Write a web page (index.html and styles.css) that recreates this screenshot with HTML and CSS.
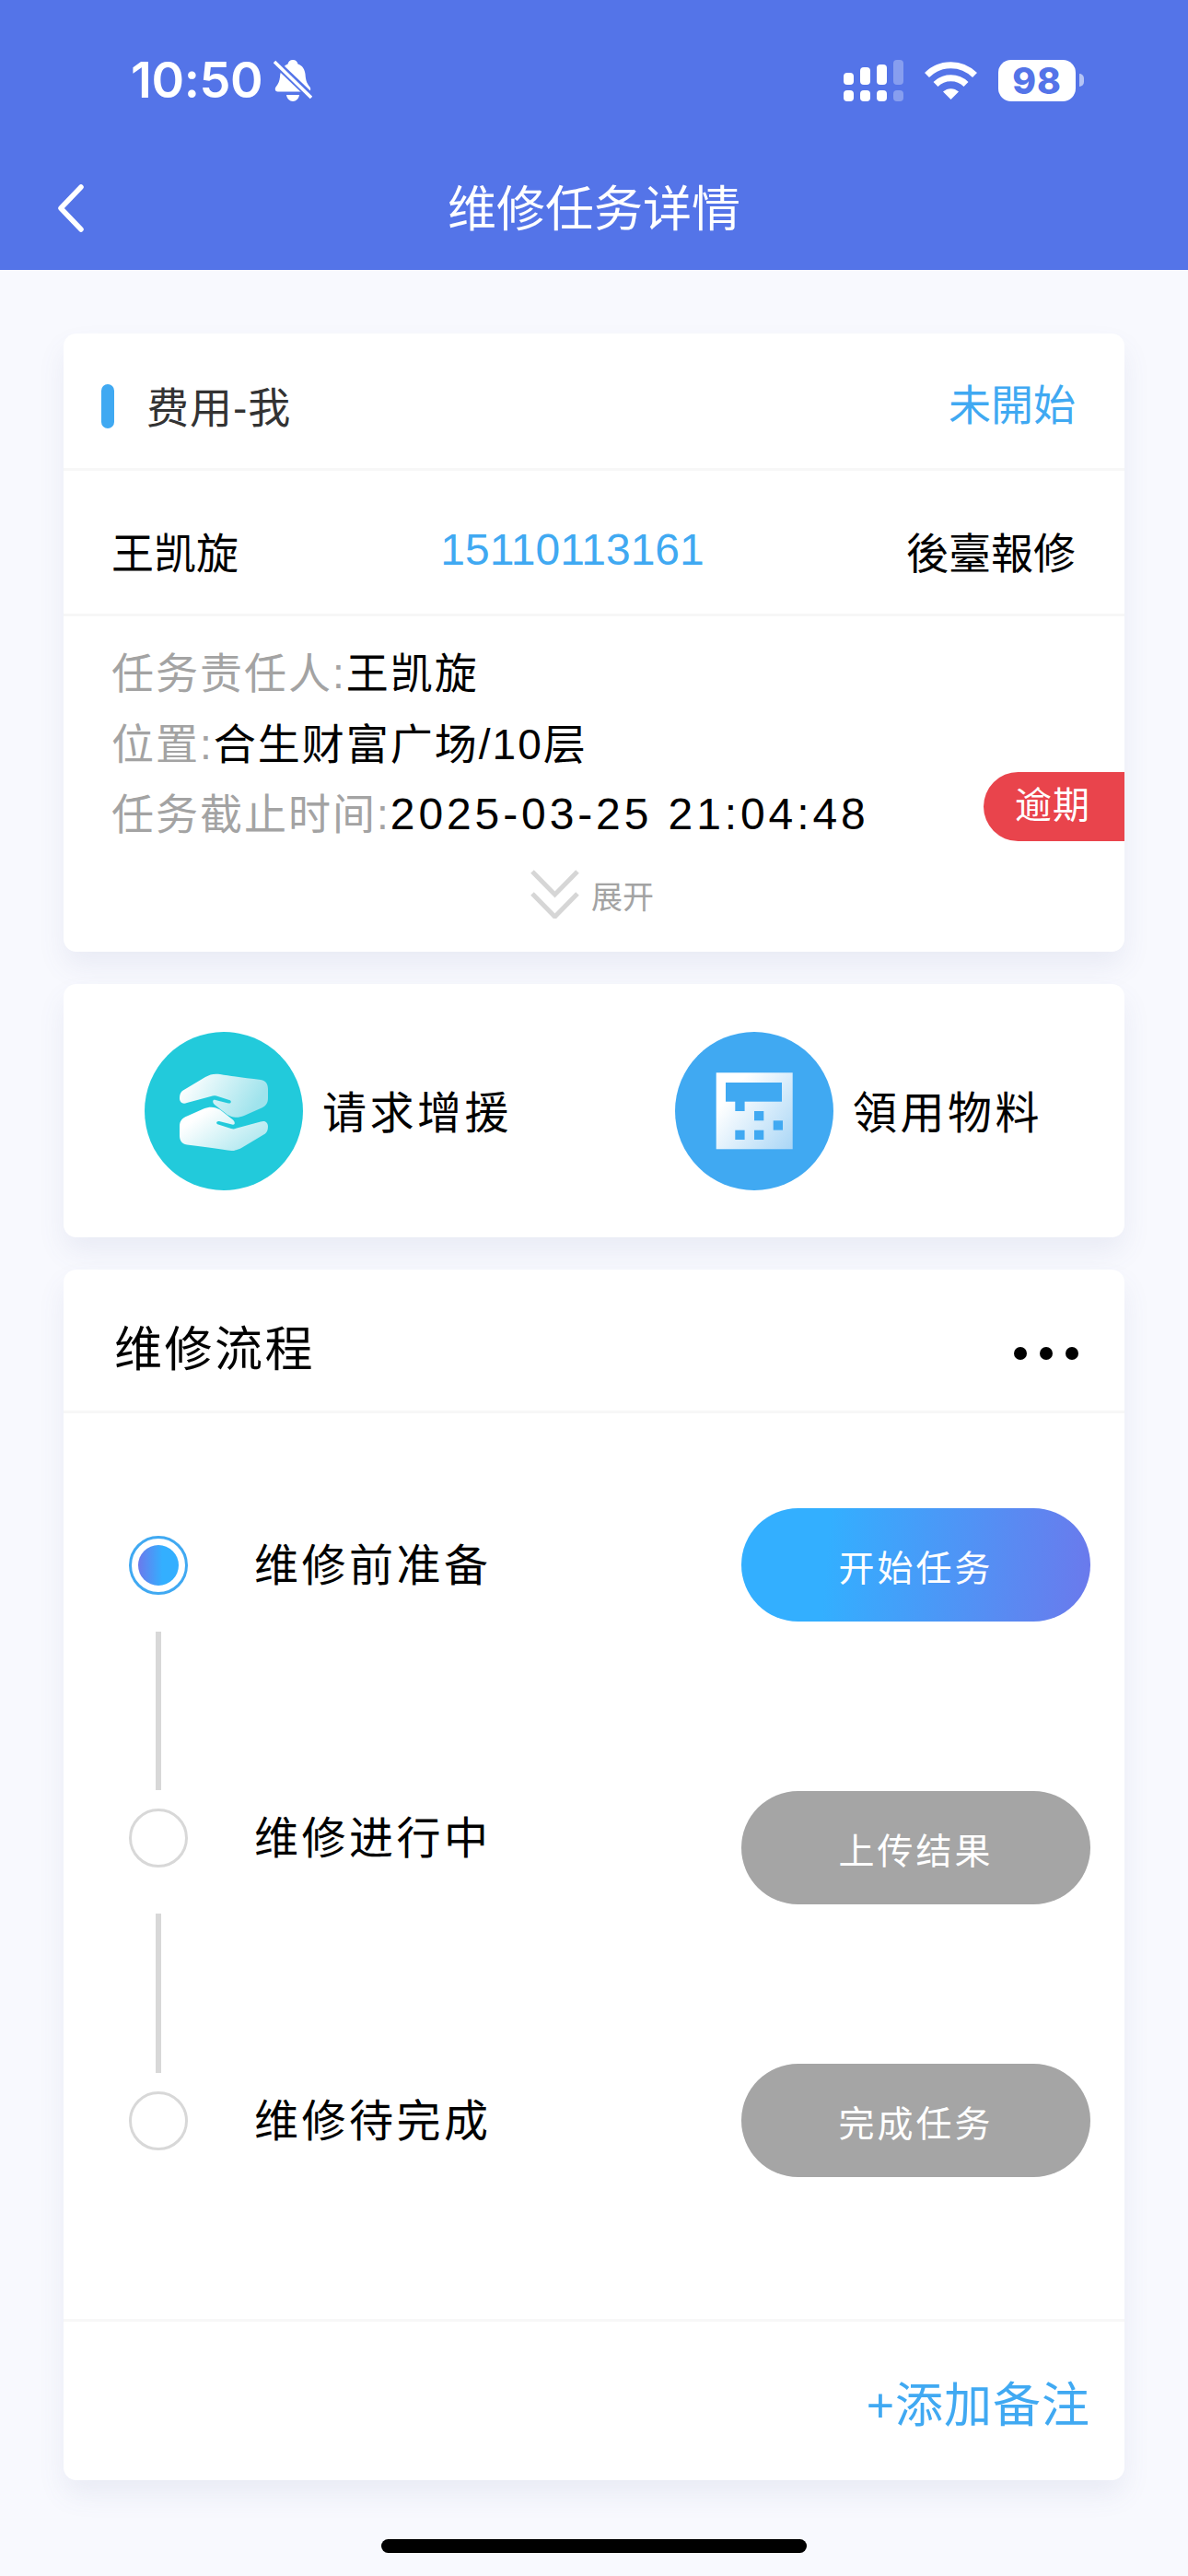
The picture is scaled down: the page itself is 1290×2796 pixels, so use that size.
FILE: index.html
```html
<!DOCTYPE html>
<html lang="zh-CN">
<head>
    <meta charset="UTF-8">
    <meta name="viewport" content="width=device-width, initial-scale=1.0">
    <title>维修任务详情</title>
    <link rel="stylesheet" href="styles.css">
</head>
<body>
    <header class="top">
        <div class="status">
            <div class="status-left">
                <span class="time">10:50</span>
                <svg class="bell" viewBox="0 0 42 45">
                    <path fill="#fff" d="M21 0c3 0 5 2 5.500 4.500 5 1.500 7.500 6 8 11 .4 5 1 9.500 5 14 1.500 2 .5 5-2 5H4.500c-2.500 0-3.500-3-2-5 3-3.500 4-7 4.500-11 .4-6 3-12 8.500-14C16 2 18 0 21 0z"/>
                    <path fill="#fff" d="M14 38h14c-.5 4-3.500 7-7 7s-6.500-3-7-7z"/>
                    <path stroke="#5474e8" stroke-width="8" d="M0 1l42 40"/>
                    <path stroke="#fff" stroke-width="3.500" d="M1 2l40 39"/>
                </svg>
            </div>
            <div class="status-right">
                <div class="signal">
                    <i class="bar b1"></i><i class="bar b2"></i><i class="bar b3"></i><i class="bar b4 dim"></i>
                    <i class="dot"></i><i class="dot"></i><i class="dot"></i><i class="dot dim"></i>
                </div>
                <svg class="wifi" viewBox="0 0 57 41">
                    <path fill="none" stroke="#fff" stroke-width="7" d="M2.500 14.500C17 0 40 0 54.500 14.500"/>
                    <path fill="none" stroke="#fff" stroke-width="7" d="M12 24.500C21 15.500 36 15.500 45 24.500"/>
                    <path fill="#fff" d="M20 32.500c5-4.500 12-4.500 17 0L28.500 41z"/>
                </svg>
                <div class="battery"><span>98</span></div>
                <i class="battery-tip"></i>
            </div>
        </div>
        <nav class="nav">
            <svg class="back" viewBox="0 0 29 52">
                <path fill="none" stroke="#fff" stroke-width="5.500" stroke-linecap="round" stroke-linejoin="round" d="M26 3L4 26l22 23"/>
            </svg>
            <h1>维修任务详情</h1>
            <span></span>
        </nav>
    </header>

    <main class="page">
        <section class="card info">
            <div class="info-head">
                <i class="marker"></i>
                <span class="info-title">费用-我</span>
                <span class="info-state">未開始</span>
            </div>
            <div class="info-person">
                <span class="person-name">王凯旋</span>
                <span class="person-phone">15110113161</span>
                <span class="person-source">後臺報修</span>
            </div>
            <div class="info-body">
                <p class="line"><span class="key">任务责任人:</span><span class="val">王凯旋</span></p>
                <p class="line"><span class="key">位置:</span><span class="val">合生财富广场/10层</span></p>
                <p class="line"><span class="key">任务截止时间:</span><span class="val val-date">2025-03-25 21:04:48</span></p>
                <span class="overdue">逾期</span>
                <div class="more">
                    <svg class="more-icon" viewBox="0 0 53 53">
                        <path fill="none" stroke="#d6d6d6" stroke-width="5" d="M2 2l24.500 25L51 2"/>
                        <path fill="none" stroke="#d6d6d6" stroke-width="5" d="M2 26l24.500 25L51 26"/>
                    </svg>
                    <span>展开</span>
                </div>
            </div>
        </section>

        <section class="card actions">
            <div class="action">
                <svg class="action-icon" viewBox="0 0 172 172">
                    <defs>
                        <linearGradient id="handTop" x1="0" y1="0" x2="1" y2="0.3">
                            <stop offset="0.1" stop-color="#fff"/>
                            <stop offset="1" stop-color="#9fe3ec"/>
                        </linearGradient>
                        <linearGradient id="handBottom" x1="1" y1="0.7" x2="0" y2="0">
                            <stop offset="0.1" stop-color="#fff"/>
                            <stop offset="1" stop-color="#9fe3ec"/>
                        </linearGradient>
                    </defs>
                    <circle cx="86" cy="86" r="86" fill="#22cadb"/>
                    <path fill="url(#handTop)" d="M41 64L66 49c5-3 10-4 16-3 12 2 28 4 44 6 6 1 8 5 8 10v10c0 6-3 9-8 11L108 91c-7 3-13 2-18-1L76 79c-3-3-2-6 1-5l14 3.500c3 .5 4-2.500 1-3.500L78 69.500c-2-.5-4-.5-6 .5L46 77c-5 2-8-1-8-5 0-4 1-6 3-8z"/>
                    <path fill="url(#handBottom)" transform="rotate(180 86 87.300)" d="M41 64L66 49c5-3 10-4 16-3 12 2 28 4 44 6 6 1 8 5 8 10v10c0 6-3 9-8 11L108 91c-7 3-13 2-18-1L76 79c-3-3-2-6 1-5l14 3.500c3 .5 4-2.500 1-3.500L78 69.500c-2-.5-4-.5-6 .5L46 77c-5 2-8-1-8-5 0-4 1-6 3-8z"/>
                </svg>
                <span class="action-text">请求增援</span>
            </div>
            <div class="action">
                <svg class="action-icon" viewBox="0 0 172 172">
                    <defs>
                        <linearGradient id="sheet" x1="0" y1="0.2" x2="1" y2="1">
                            <stop offset="0.15" stop-color="#fff"/>
                            <stop offset="1" stop-color="#a9d6f6"/>
                        </linearGradient>
                    </defs>
                    <circle cx="86" cy="86" r="86" fill="#40a9f2"/>
                    <rect x="44.700" y="44.300" width="83" height="83" fill="url(#sheet)"/>
                    <g fill="#40a9f2">
                        <rect x="55" y="55" width="61" height="20.700"/>
                        <rect x="65.300" y="75" width="10.300" height="11"/>
                        <rect x="86" y="86" width="10.300" height="10.300"/>
                        <rect x="106.700" y="96.300" width="10.300" height="10.300"/>
                        <rect x="65.300" y="106.700" width="10.300" height="10.300"/>
                        <rect x="86" y="106.700" width="10.300" height="10.300"/>
                    </g>
                </svg>
                <span class="action-text">領用物料</span>
            </div>
        </section>

        <section class="card flow">
            <div class="flow-head">
                <h2>维修流程</h2>
                <div class="menu"><i></i><i></i><i></i></div>
            </div>
            <div class="steps">
                <div class="step">
                    <span class="mark mark-on"><i></i></span>
                    <span class="step-text">维修前准备</span>
                    <span class="btn btn-on">开始任务</span>
                </div>
                <i class="link link-a"></i>
                <div class="step step-up">
                    <span class="mark"></span>
                    <span class="step-text">维修进行中</span>
                    <span class="btn">上传结果</span>
                </div>
                <i class="link link-b"></i>
                <div class="step">
                    <span class="mark"></span>
                    <span class="step-text">维修待完成</span>
                    <span class="btn">完成任务</span>
                </div>
            </div>
            <div class="flow-foot">+添加备注</div>
        </section>
    </main>

    <div class="home-bar"></div>
</body>
</html>
```

FILE: styles.css
```css
* {
    box-sizing: border-box;
}
html, body {
    margin: 0;
    padding: 0;
}
body {
    width: 1290px;
    height: 2796px;
    overflow: hidden;
    background: #f8f9fe;
    color: #000;
    font-family: "Liberation Sans", "Noto Sans CJK SC", sans-serif;
}
i {
    display: block;
}
p, h1, h2 {
    margin: 0;
    font-weight: 400;
}

/* header */
.top {
    height: 293px;
    background: #5474e8;
    color: #fff;
}
.status {
    height: 174px;
    display: flex;
    justify-content: space-between;
    align-items: center;
    padding: 0 113px 0 142px;
}
.status-left {
    display: flex;
    align-items: center;
    gap: 12px;
}
.time {
    font-family: Inter, sans-serif;
    font-size: 54px;
    font-weight: 600;
    line-height: 54px;
    letter-spacing: -0.4px;
}
.bell {
    width: 42px;
    height: 45px;
}
.status-right {
    display: flex;
    align-items: center;
}
.signal {
    width: 65px;
    height: 45px;
    display: grid;
    grid-template-columns: repeat(4, 11px);
    grid-template-rows: 27px 12px;
    column-gap: 7px;
    row-gap: 6px;
    align-items: end;
}
.bar {
    width: 11px;
    border-radius: 4px;
}
.bar, .dot {
    background: #fff;
}
.b1 { height: 13px; }
.b2 { height: 19px; }
.b3 { height: 22px; }
.b4 { height: 27px; }
.dot {
    height: 12px;
    border-radius: 4px;
}
.dim {
    opacity: 0.3;
}
.wifi {
    width: 57px;
    height: 41px;
    margin-left: 23px;
}
.battery {
    width: 84px;
    height: 45px;
    margin-left: 23px;
    background: #fff;
    border-radius: 14px;
    display: flex;
    align-items: center;
    justify-content: center;
    color: #5474e8;
    font-family: Inter, sans-serif;
    font-size: 39px;
    font-weight: 800;
    letter-spacing: 1px;
}
.battery-tip {
    width: 5px;
    height: 14px;
    margin-left: 4px;
    background: #b5c4f5;
    border-radius: 0 7px 7px 0;
}
.nav {
    height: 104px;
    padding: 3px 62px 0;
    display: grid;
    grid-template-columns: 1fr auto 1fr;
    align-items: center;
}
.back {
    width: 29px;
    height: 52px;
    margin-top: -3px;
}
.nav h1 {
    font-size: 53px;
    line-height: 60px;
}

/* cards */
.page {
    padding: 69px 69px 0;
    display: flex;
    flex-direction: column;
    gap: 35px;
}
.card {
    background: #fff;
    border-radius: 14px;
    box-shadow: 0 16px 30px rgba(90, 100, 150, 0.09);
}
.info {
    height: 671px;
}
.info-head {
    height: 149px;
    padding: 12px 53px 0 41px;
    display: flex;
    align-items: center;
    border-bottom: 3px solid #f7f7f7;
}
.marker {
    width: 14px;
    height: 48px;
    border-radius: 7px;
    background: #40a9f2;
    margin-right: 35px;
}
.info-title {
    font-size: 46px;
    color: #333;
    margin-bottom: 4px;
    letter-spacing: 1px;
}
.info-state {
    margin-left: auto;
    margin-bottom: 10px;
    font-size: 46px;
    color: #40a9f2;
}
.info-person {
    height: 158px;
    padding: 16px 53px 0 52px;
    display: flex;
    justify-content: space-between;
    align-items: center;
    font-size: 46px;
    border-bottom: 3px solid #f7f7f7;
}
.person-phone {
    color: #40a9f2;
    font-size: 48px;
}
.info-body {
    position: relative;
    padding: 24px 0 0 52px;
}
.line {
    height: 76.5px;
    line-height: 76px;
    font-size: 46px;
    letter-spacing: 2px;
    white-space: nowrap;
}
.key {
    color: #a3a3a3;
}
.val-date {
    font-size: 48px;
    letter-spacing: 3.900px;
}
.overdue {
    position: absolute;
    right: 0;
    top: 169px;
    width: 153px;
    height: 75px;
    padding-left: 34px;
    border-radius: 38px 0 0 38px;
    background: #e9444c;
    color: #fff;
    font-size: 40px;
    line-height: 72px;
    letter-spacing: 1px;
}
.more {
    height: 70px;
    margin-top: 13px;
    margin-left: 455px;
    display: flex;
    align-items: center;
    gap: 13px;
    color: #a3a3a3;
    font-size: 34px;
}
.more span {
    margin-top: 2px;
}
.more-icon {
    width: 53px;
    height: 53px;
}

.actions {
    height: 275px;
    padding: 0 0 0 88px;
    display: grid;
    grid-template-columns: 576px 1fr;
    align-items: center;
}
.action {
    display: flex;
    align-items: center;
    gap: 21px;
}
.action-icon {
    width: 172px;
    height: 172px;
}
.action-text {
    font-size: 48px;
    letter-spacing: 3.500px;
    margin-bottom: 4px;
}

.flow {
    height: 1314px;
}
.flow-head {
    height: 156px;
    padding: 28px 50px 0 55px;
    display: flex;
    justify-content: space-between;
    align-items: center;
    border-bottom: 3px solid #f7f7f7;
}
.flow-head h2 {
    font-size: 52px;
    letter-spacing: 2.500px;
    margin-bottom: 16px;
}
.menu {
    display: flex;
    gap: 14px;
}
.menu i {
    width: 14px;
    height: 14px;
    border-radius: 50%;
    background: #000;
}
.steps {
    padding: 103px 37px 0 71px;
    height: 986px;
    border-bottom: 3px solid #f7f7f7;
}
.step {
    height: 123px;
    display: flex;
    align-items: center;
}
.mark {
    width: 64px;
    height: 64px;
    border: 3px solid #d8d8d8;
    border-radius: 50%;
    display: flex;
    align-items: center;
    justify-content: center;
}
.mark-on {
    border-color: #40a9f2;
}
.mark-on i {
    width: 44px;
    height: 44px;
    border-radius: 50%;
    background: linear-gradient(90deg, #6b79ec, #33afff 60%);
}
.step-up .mark {
    margin-bottom: 21px;
}
.step-text {
    margin-left: 72px;
    margin-bottom: 8px;
    font-size: 48px;
    letter-spacing: 3.500px;
}
.step-up .step-text {
    margin-bottom: 29px;
}
.btn {
    margin-left: auto;
    width: 379px;
    height: 123px;
    border-radius: 62px;
    background: #a5a5a5;
    color: #fff;
    font-size: 39px;
    letter-spacing: 3px;
    display: flex;
    align-items: center;
    justify-content: center;
}
.btn-on {
    background: linear-gradient(95deg, #33afff 25%, #6b79ec 100%);
}
.link {
    width: 6px;
    background: #d8d8d8;
    margin-left: 29px;
}
.link-a {
    height: 172px;
    margin-top: 11px;
    margin-bottom: 1px;
}
.link-b {
    height: 173px;
    margin-top: 10px;
    margin-bottom: -10px;
}
.flow-foot {
    height: 172px;
    padding-right: 37px;
    display: flex;
    justify-content: flex-end;
    align-items: center;
    color: #40a9f2;
    font-size: 52px;
    letter-spacing: 1px;
}

.home-bar {
    width: 462px;
    height: 15px;
    margin: 64px auto 0;
    background: #000;
    border-radius: 8px;
}
```
